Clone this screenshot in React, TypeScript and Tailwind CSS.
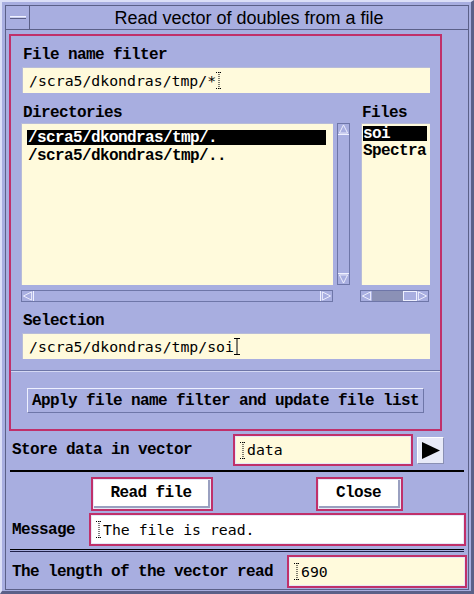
import React from "react";

const LBL =
  "font-['Liberation_Mono',monospace] font-bold text-[16px] tracking-[-0.6px] leading-[16px] text-black whitespace-pre";
const TXT =
  "font-['DejaVu_Sans_Mono',monospace] text-[14.8px] leading-[16px] text-black whitespace-pre";

// small I-beam text cursor
const Cursor = ({ dotted }: { dotted?: boolean }) => (
  <svg width="6" height="17" viewBox="0 0 6 17" className="shrink-0">
    <path
      d="M0 0.5H6M0 16.5H6M3 0V17"
      stroke="black"
      strokeWidth="1"
      strokeDasharray={dotted ? "1 1" : undefined}
    />
  </svg>
);

// scrollbar arrow, outlined Motif style
const Arrow = ({ dir }: { dir: "up" | "down" | "left" | "right" }) => {
  const pts = {
    up: "5.5,1 10,10 1,10",
    down: "1,1 10,1 5.5,10",
    left: "1,5.5 10,1 10,10",
    right: "1,1 10,5.5 1,10",
  }[dir];
  return (
    <svg width="11" height="10" viewBox="0 0 11 11" className="shrink-0">
      <polygon points={pts} fill="#a8aee0" stroke="#f2f3ff" strokeWidth="1" />
    </svg>
  );
};

// magenta-framed text field
const FramedField = ({
  w,
  white,
  children,
}: {
  w: string;
  white?: boolean;
  children: React.ReactNode;
}) => (
  <div className={`${w} h-full border-2 border-[#c0306a] p-[1px] bg-[#e6e8f6]`}>
    <div
      className={`h-full flex items-center pl-[4px] gap-[1px] ${
        white ? "bg-white" : "bg-[#fffadc]"
      }`}
    >
      {children}
    </div>
  </div>
);

const FramedButton = ({ w, label }: { w: string; label: string }) => (
  <div className={`${w} h-full border-2 border-[#c0306a] p-[1px] bg-[#e6e8f6]`}>
    <div className="h-full bg-white border-r-2 border-b-2 border-[#9aa0c0] flex items-center justify-center">
      <span className={LBL}>{label}</span>
    </div>
  </div>
);

export default function App() {
  return (
    <div className="w-[474px] h-[594px] bg-[#a8aee0] overflow-hidden">
      {/* window frame */}
      <div className="h-full w-full border-l-2 border-t-2 border-[#dcdff7] border-r-[3px] border-b-[3px] border-r-[#5b6088] border-b-[#5b6088] pl-[3px] pt-[3px] pr-[2px] pb-[1px]">
        <div className="h-full border border-[#5b6088] flex flex-col">
          {/* title bar */}
          <div className="h-[24px] shrink-0 flex border-b border-[#5b6088]">
            <div className="w-[24px] border-r border-[#5b6088] flex items-center justify-center">
              <div className="w-[16px] h-[3px] border-t border-[#f0f2ff] border-b border-b-[#5b6088] bg-[#c8ccee]" />
            </div>
            <div className="flex-1 flex items-center justify-center font-['Liberation_Sans',sans-serif] text-[18px] leading-none text-black pt-[1px]">
              Read vector of doubles from a file
            </div>
          </div>

          {/* file selection box */}
          <div className="ml-[3px] mt-[4px] w-[433px] h-[397px] shrink-0 border-2 border-[#c0306a] flex flex-col">
            <div className={`${LBL} ml-[12px] mt-[11px]`}>File name filter</div>
            <div className="ml-[11px] mt-[4px] w-[408px] h-[26px] bg-[#fffadc] border-t border-l border-[#b8bcd8] flex items-center pl-[6px]">
              <span className={TXT}>/scra5/dkondras/tmp/*</span>
              <Cursor dotted />
            </div>

            <div className="flex mt-[12px]">
              <div className={`${LBL} ml-[12px] w-[339px]`}>Directories</div>
              <div className={LBL}>Files</div>
            </div>

            {/* lists */}
            <div className="flex mt-[2px] h-[162px] ml-[10px]">
              <div className="w-[312px] h-full bg-[#fffadc] border-t border-l border-[#b8bcd8] pt-[6px] pl-[5px] flex flex-col gap-[3px]">
                <div className="w-[299px] h-[15px] bg-black flex items-center">
                  <span className={`${LBL} text-white pl-[1px]`}>/scra5/dkondras/tmp/.</span>
                </div>
                <div className="h-[15px] flex items-center">
                  <span className={`${LBL} pl-[1px]`}>/scra5/dkondras/tmp/..</span>
                </div>
              </div>
              {/* vertical scrollbar */}
              <div className="ml-[4px] w-[13px] h-full border border-[#6e76a8] flex flex-col items-center">
                <Arrow dir="up" />
                <div className="flex-1 w-full border-t border-b border-[#eef0ff]" />
                <Arrow dir="down" />
              </div>
              <div className="ml-[11px] w-[69px] h-full bg-[#fffadc] border-t border-l border-[#b8bcd8] pt-[2px] pl-[1px] flex flex-col gap-[2px]">
                <div className="w-[64px] h-[15px] bg-black flex items-center">
                  <span className={`${LBL} text-white`}>soi</span>
                </div>
                <div className="h-[15px] flex items-center">
                  <span className={LBL}>Spectra</span>
                </div>
              </div>
            </div>

            {/* horizontal scrollbars */}
            <div className="flex mt-[5px] h-[12px] ml-[10px]">
              <div className="w-[312px] h-full border border-[#6e76a8] flex items-center">
                <Arrow dir="left" />
                <div className="flex-1 h-full border-l border-r border-[#eef0ff]" />
                <Arrow dir="right" />
              </div>
              <div className="ml-[27px] w-[69px] h-full border border-[#6e76a8] flex items-center">
                <Arrow dir="left" />
                <div className="w-[31px] h-full bg-[#8b91b6]" />
                <div className="w-[14px] h-full border border-[#eef0ff]" />
                <Arrow dir="right" />
              </div>
            </div>

            <div className={`${LBL} ml-[12px] mt-[11px]`}>Selection</div>
            <div className="ml-[11px] mt-[4px] w-[408px] h-[26px] bg-[#fffadc] border-t border-l border-[#b8bcd8] flex items-center pl-[6px]">
              <span className={TXT}>/scra5/dkondras/tmp/soi</span>
              <Cursor />
            </div>

            <div className="mt-[11px] h-[2px] border-t border-[#6e76a8] border-b border-b-[#d4d8f4]" />

            <div className="ml-[16px] mt-[16px] w-[397px] h-[25px] border border-[#eef0ff] border-r-[#6e76a8] border-b-[#6e76a8] flex items-center justify-center">
              <span className={LBL}>Apply file name filter and update file list</span>
            </div>
          </div>

          {/* store row */}
          <div className="mt-[3px] h-[32px] shrink-0 flex items-center pl-[6px]">
            <div className={`${LBL} w-[221px]`}>Store data in vector</div>
            <FramedField w="w-[180px]">
              <Cursor dotted />
              <span className={TXT}>data</span>
            </FramedField>
            <div className="ml-[4px] w-[27px] h-[27px] bg-[#e8eaf8] border border-[#ffffff] border-r-[#8a90b4] border-b-[#8a90b4] flex items-center justify-center">
              <svg width="18" height="17" viewBox="0 0 18 17">
                <polygon points="0,0 18,8.5 0,17" fill="black" />
              </svg>
            </div>
          </div>

          <div className="ml-[4px] mt-[4px] w-[454px] h-[2px] bg-black shrink-0" />

          {/* buttons */}
          <div className="mt-[5px] h-[34px] shrink-0 flex">
            <div className="ml-[85px]">
              <FramedButton w="w-[122px]" label="Read file" />
            </div>
            <div className="ml-[103px]">
              <FramedButton w="w-[87px]" label="Close" />
            </div>
          </div>

          {/* message row */}
          <div className="mt-[2px] h-[33px] shrink-0 flex items-center pl-[6px]">
            <div className={`${LBL} w-[77px]`}>Message</div>
            <FramedField w="w-[377px]" white>
              <Cursor dotted />
              <span className={TXT}>The file is read.</span>
            </FramedField>
          </div>

          <div className="ml-[4px] mt-[3px] w-[454px] h-[3px] border-t border-black border-b border-b-[#20204a] shrink-0" />

          {/* length row */}
          <div className="mt-[3px] h-[33px] shrink-0 flex items-center pl-[6px]">
            <div className={`${LBL} w-[275px]`}>The length of the vector read</div>
            <FramedField w="w-[180px]">
              <Cursor dotted />
              <span className={TXT}>690</span>
            </FramedField>
          </div>
        </div>
      </div>
    </div>
  );
}
